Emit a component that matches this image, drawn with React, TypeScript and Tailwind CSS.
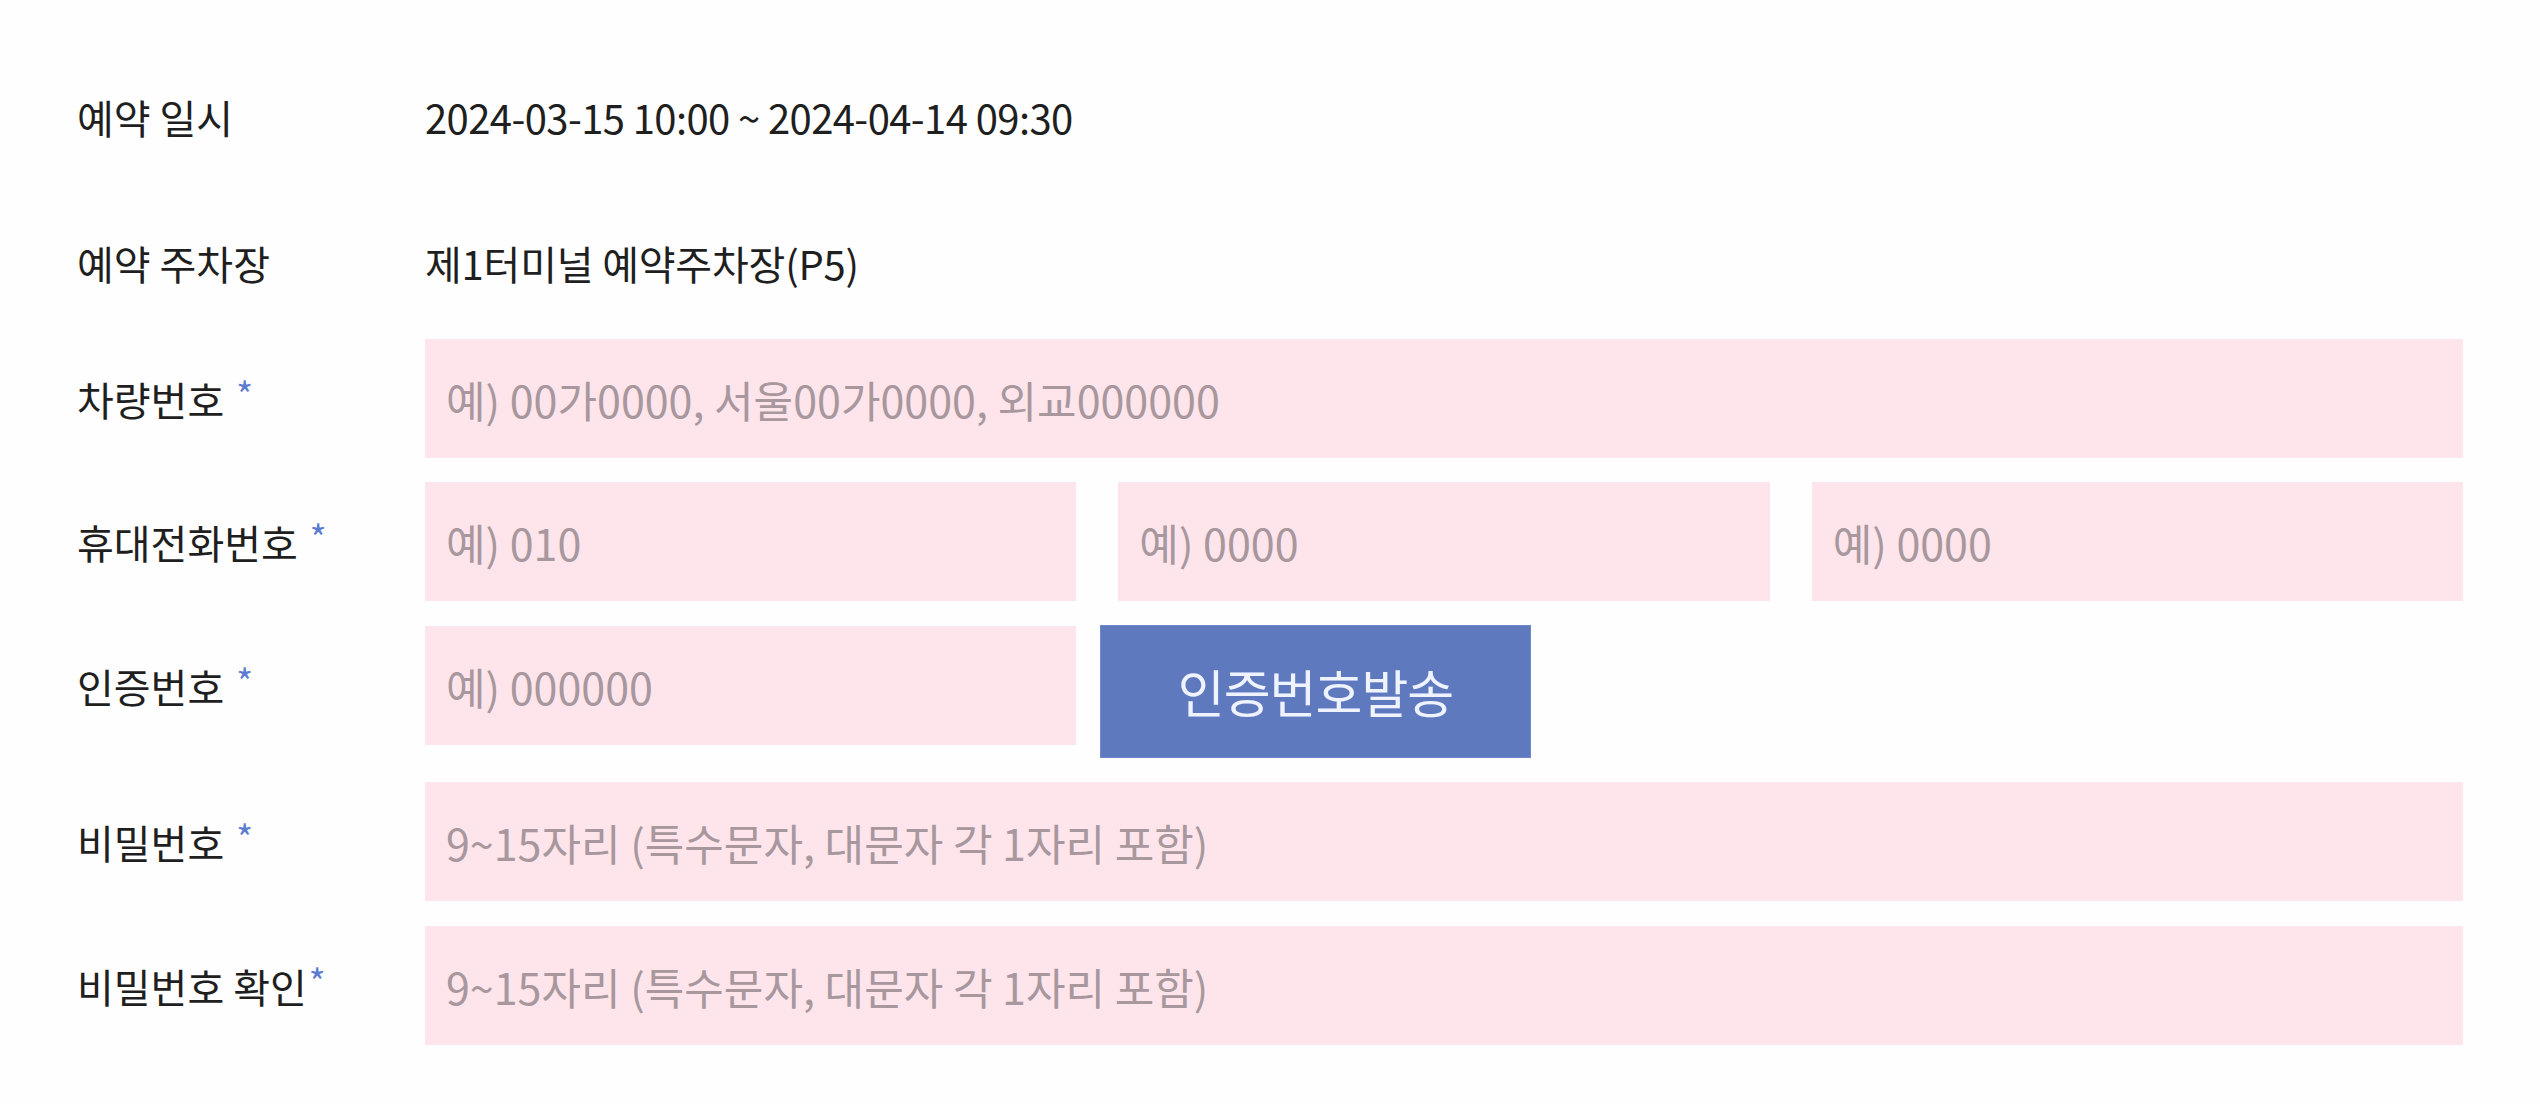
import React from "react";

const font = { fontFamily: '"Noto Sans CJK KR", "Noto Sans", sans-serif' };

function Label({ text, required, tight }: { text: string; required?: boolean; tight?: boolean }) {
  return (
    <div className="w-[348px] shrink-0 flex items-center text-[40px] leading-none tracking-[0px] text-[#1f1f1f]">
      <span>{text}</span>
      {required && (
        <span className={`self-start -mt-[4px] text-[36px] leading-none text-[#5b7bd0] ${tight ? "ml-[2px]" : "ml-[12px]"}`}>*</span>
      )}
    </div>
  );
}

function Field({ placeholder, className = "" }: { placeholder: string; className?: string }) {
  return (
    <input
      type="text"
      placeholder={placeholder}
      style={font}
      className={`h-[119px] bg-[#fde5eb] pl-[21px] text-[43px] text-[#222] placeholder:text-[#a8979d] outline-none border-0 min-w-0 ${className}`}
    />
  );
}

export default function App() {
  return (
    <div style={font} className="w-full h-[1104px] bg-[#fefefe] pl-[77px] pr-[77px] pt-[57px] flex flex-col">
      <div className="flex items-center h-[119px]">
        <Label text="예약 일시" />
        <div className="text-[40px] leading-none tracking-[-0.6px] text-[#1f1f1f]">2024-03-15 10:00 ~ 2024-04-14 09:30</div>
      </div>
      <div className="flex items-center h-[119px] mt-[27px]">
        <Label text="예약 주차장" />
        <div className="text-[40px] leading-none tracking-[-0.2px] text-[#1f1f1f]">제1터미널 예약주차장(P5)</div>
      </div>
      <div className="flex items-center mt-[17px]">
        <Label text="차량번호" required />
        <Field className="flex-1" placeholder="예) 00가0000, 서울00가0000, 외교000000" />
      </div>
      <div className="flex items-center mt-[24px]">
        <Label text="휴대전화번호" required />
        <div className="flex-1 grid grid-cols-3 gap-[42px]">
          <Field className="w-full" placeholder="예) 010" />
          <Field className="w-full" placeholder="예) 0000" />
          <Field className="w-full" placeholder="예) 0000" />
        </div>
      </div>
      <div className="flex items-start mt-[25px]">
        <div className="h-[119px] flex items-center">
          <Label text="인증번호" required />
        </div>
        <div className="flex-1 flex items-start gap-[24px]">
          <Field className="w-[651px]" placeholder="예) 000000" />
          <button
            type="button"
            style={font}
            className="w-[431px] h-[133px] -mt-[1px] bg-[#5f79bf] text-[#eef3ff] text-[51px] leading-none tracking-[-1px] border border-[#6f88cc]"
          >
            인증번호발송
          </button>
        </div>
      </div>
      <div className="flex items-center mt-[24px]">
        <Label text="비밀번호" required />
        <Field className="flex-1 h-[118px]" placeholder="9~15자리 (특수문자, 대문자 각 1자리 포함)" />
      </div>
      <div className="flex items-center mt-[25px]">
        <Label text="비밀번호 확인" required tight />
        <Field className="flex-1" placeholder="9~15자리 (특수문자, 대문자 각 1자리 포함)" />
      </div>
    </div>
  );
}
